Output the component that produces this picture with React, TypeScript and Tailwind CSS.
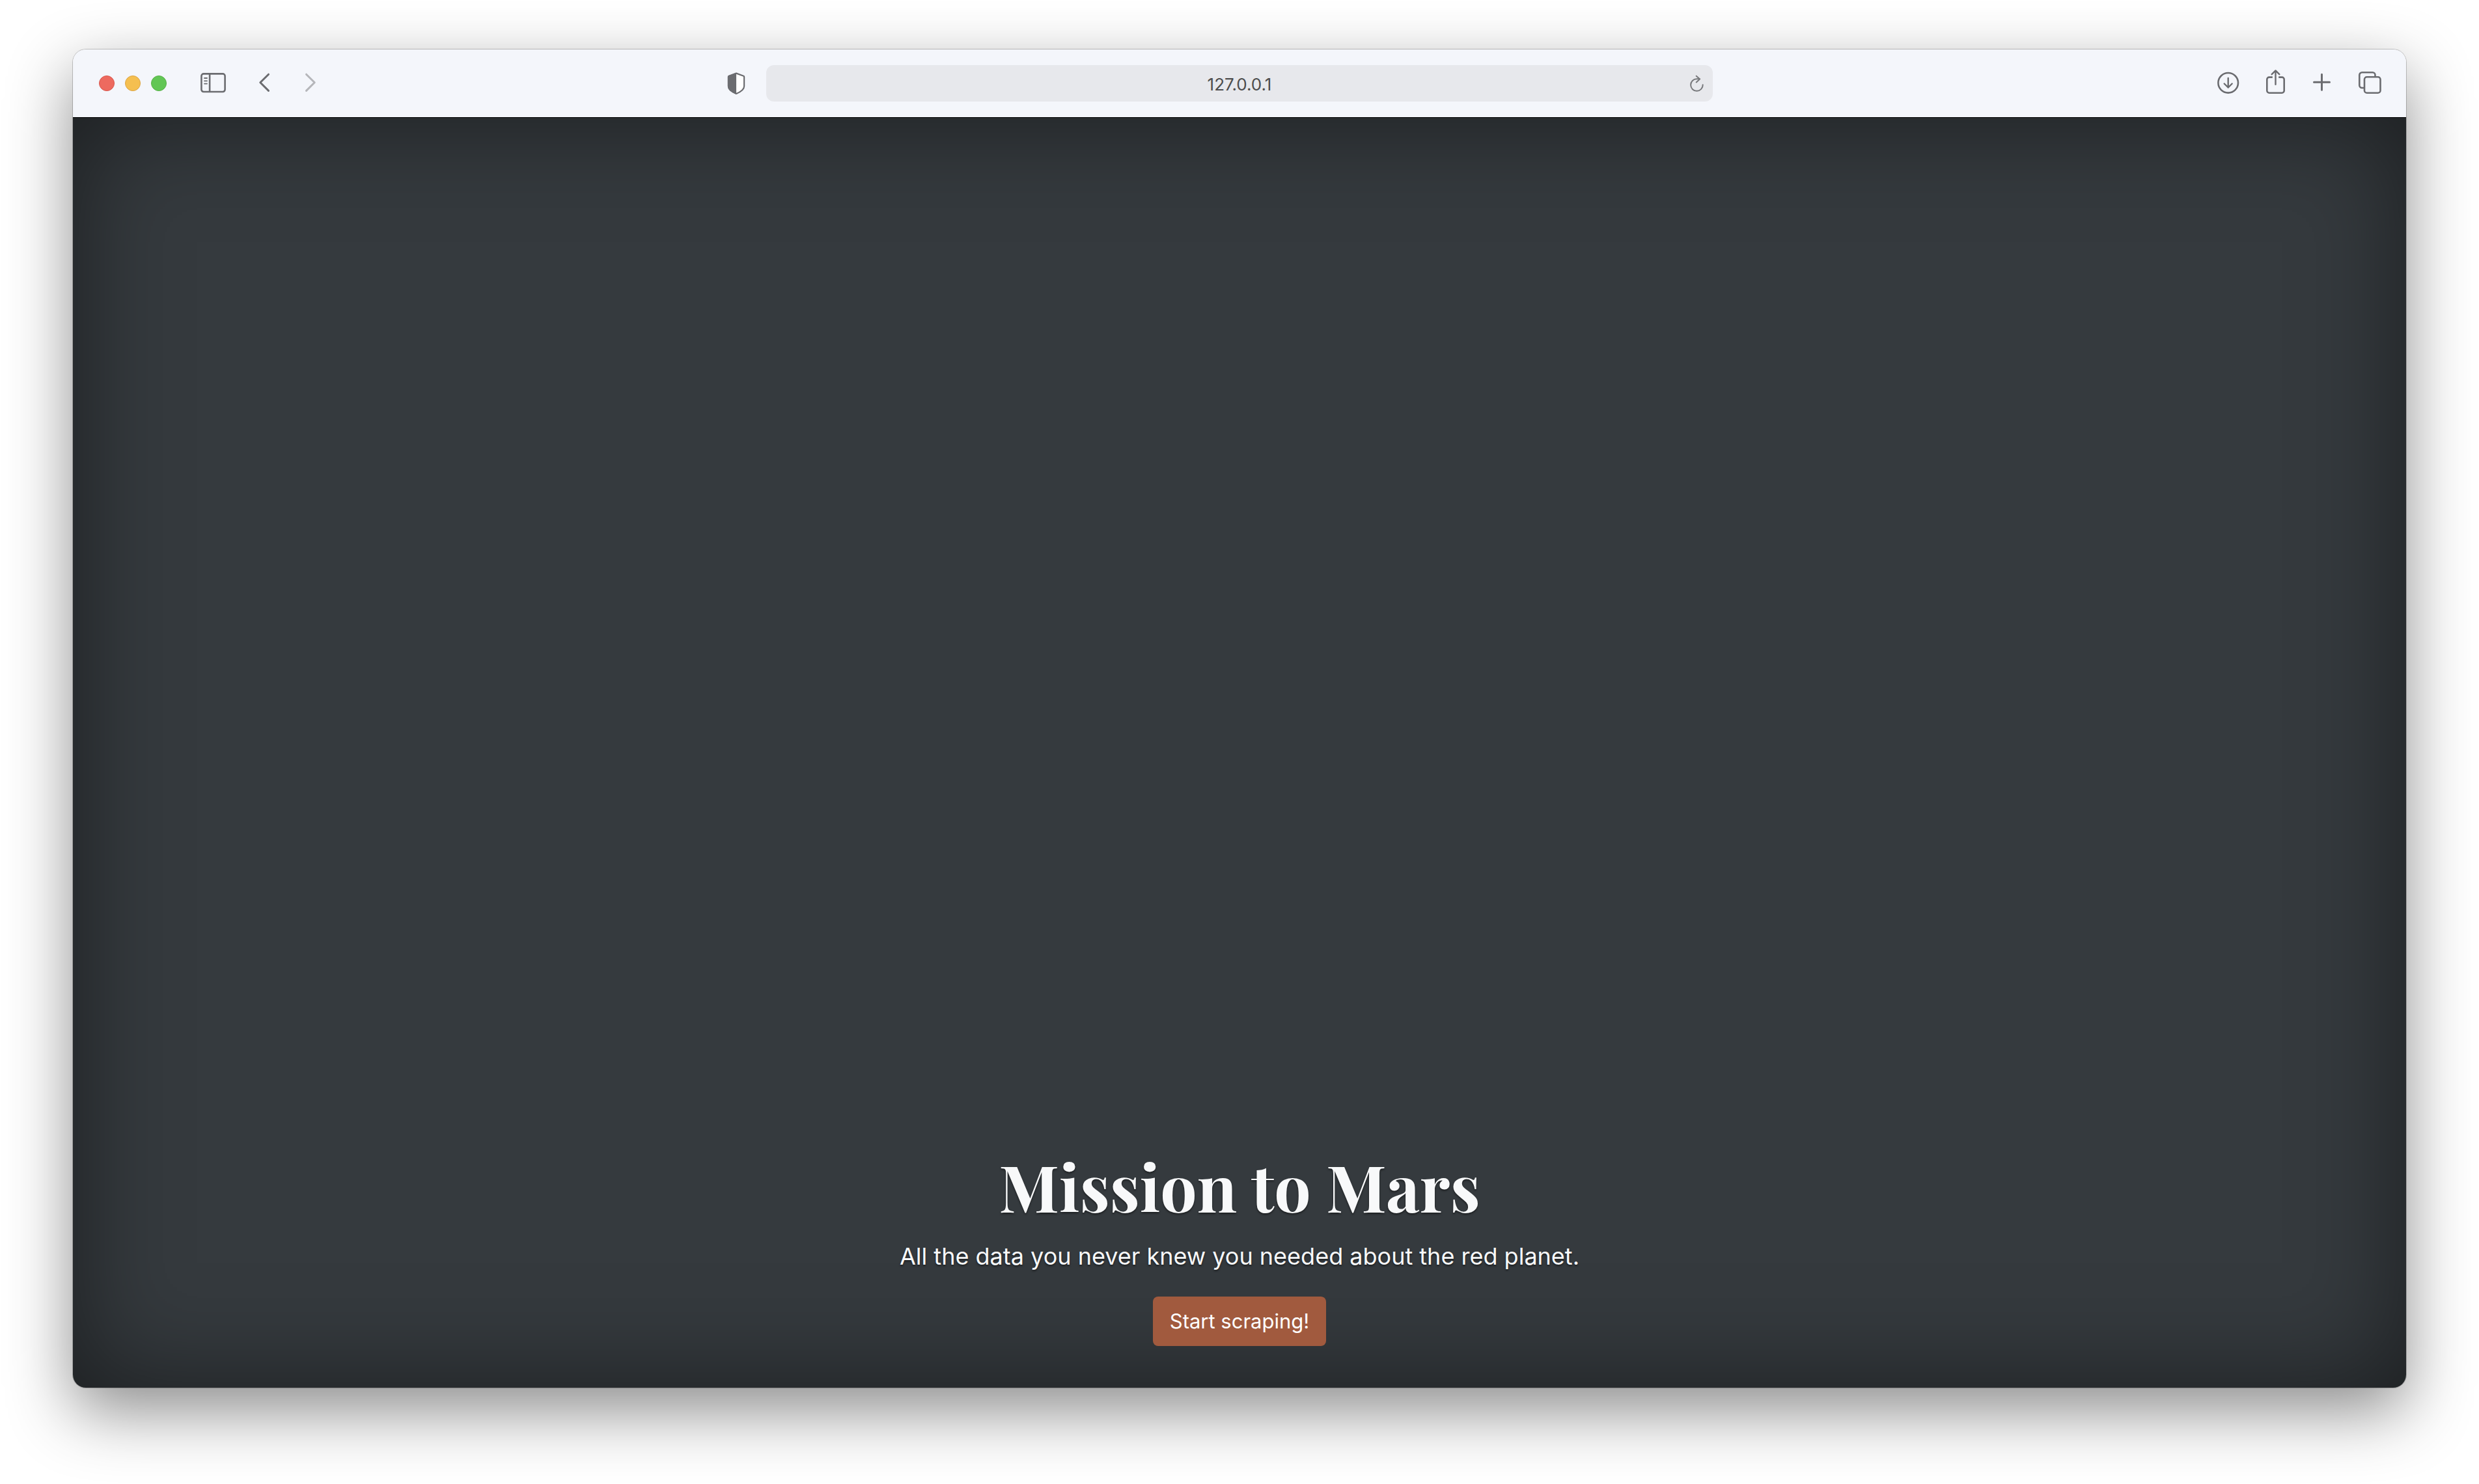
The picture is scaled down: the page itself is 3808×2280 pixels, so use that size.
import type { ReactNode } from "react";

function IconButton({ label, className, children }: { label: string; className?: string; children: ReactNode }) {
  return (
    <button type="button" aria-label={label} className={className}>
      {children}
    </button>
  );
}

const stroke = {
  fill: "none",
  stroke: "currentColor",
  strokeWidth: 2.6,
  strokeLinecap: "round" as const,
  strokeLinejoin: "round" as const,
};

function WindowControls() {
  return (
    <div className="flex gap-4">
      <button type="button" aria-label="Close" className="size-6 rounded-full border border-[#d9564c] bg-[#ed6a5f]" />
      <button type="button" aria-label="Minimize" className="size-6 rounded-full border border-[#dca545] bg-[#f5bf50]" />
      <button type="button" aria-label="Zoom" className="size-6 rounded-full border border-[#56b147] bg-[#62c655]" />
    </div>
  );
}

function Toolbar() {
  return (
    <header className="grid h-26 grid-cols-[1fr_minmax(0,1454px)_1fr] items-center bg-[#f4f6fb] px-9 text-[#6b6c70]">
      <div className="flex items-center pl-1 pr-8">
        <WindowControls />
        <IconButton label="Show sidebar" className="ml-13">
          <svg width="40" height="32" viewBox="0 0 40 32" {...stroke}>
            <rect x="1.4" y="1.4" width="36.2" height="27.6" rx="3.4" />
            <path d="M14.1 1.6v27.2" />
            <path d="M6 8h4M6 12.3h4M6 16.6h4" strokeWidth="1.8" />
          </svg>
        </IconButton>
        <IconButton label="Back" className="ml-12">
          <svg width="20" height="32" viewBox="0 0 20 32" {...stroke} strokeWidth="3">
            <path d="M16.5 2.2L3.8 14.8l12.7 12.6" />
          </svg>
        </IconButton>
        <IconButton label="Forward" className="ml-13 text-[#b5b6ba]">
          <svg width="20" height="32" viewBox="0 0 20 32" {...stroke} strokeWidth="3">
            <path d="M2.5 2.2l12.700 12.600L2.500 27.400" />
          </svg>
        </IconButton>
        <IconButton label="Privacy report" className="ml-auto">
          <svg width="28" height="34" viewBox="0 0 28 34">
            <path
              d="M14 1.6l11.2 4.1c.6.2.9.6.9 1.2v14.6c0 5-5 8.500-12.100 11.500C7 30 1.900 26.500 1.900 21.500V6.900c0-.6.3-1 .9-1.200z"
              fill="#fff"
              stroke="currentColor"
              strokeWidth="2.2"
              strokeLinejoin="round"
            />
            <path d="M14 .8L2.300 5.100C1.300 5.500.9 6.100.9 7v14.500c0 5.600 5.300 9.300 13.100 12.400z" fill="currentColor" />
          </svg>
        </IconButton>
      </div>

      <div className="relative">
        <input
          type="text"
          aria-label="Address"
          defaultValue="127.0.0.1"
          className="block h-14 w-full rounded-xl bg-[#e7e8ec] px-14 pt-0.5 text-center text-[26px] leading-8 text-[#4d4d4d] outline-none"
        />
        <IconButton label="Reload" className="absolute right-3 top-3.5">
          <svg width="24" height="28" viewBox="0 0 24 28" {...stroke} strokeWidth="2" stroke="#77787b">
            <path d="M20.700 16.200A9.300 9.300 0 1 1 11.400 7.200h4.500" />
            <path d="M10.700 2.700l5.400 4.700-5.400 5" />
          </svg>
        </IconButton>
      </div>

      <div className="flex items-center justify-end gap-9 pr-0.5">
        <IconButton label="Downloads">
          <svg width="36" height="42" viewBox="0 0 36 42" {...stroke}>
            <circle cx="16.700" cy="20.300" r="15.300" />
            <path d="M16.700 13v14.500M10.700 21.500l6 6 6-6" strokeWidth="2.400" />
          </svg>
        </IconButton>
        <IconButton label="Share">
          <svg width="36" height="42" viewBox="0 0 36 42" {...stroke}>
            <path d="M12.800 11.600H7.700a3.400 3.400 0 0 0-3.400 3.400v17.300a3.400 3.400 0 0 0 3.400 3.400h19.600a3.400 3.400 0 0 0 3.400-3.400V15a3.400 3.400 0 0 0-3.400-3.400h-5.100" strokeLinecap="butt" />
            <path d="M17.500 22.800V1.400M11.700 7.200l5.800-5.800 5.800 5.800" strokeWidth="2.400" />
          </svg>
        </IconButton>
        <IconButton label="New tab">
          <svg width="36" height="42" viewBox="0 0 36 42" {...stroke} strokeWidth="3">
            <path d="M16.500 7.300v24M4.500 19.300h24" />
          </svg>
        </IconButton>
        <IconButton label="Tab overview">
          <svg width="36" height="42" viewBox="0 0 36 42" {...stroke}>
            <path d="M26.500 11V8.300a4 4 0 0 0-4-4H6.300a4 4 0 0 0-4 4V24a4 4 0 0 0 4 4H10" strokeLinecap="butt" />
            <rect x="10" y="11.300" width="24.500" height="24.400" rx="3.800" />
          </svg>
        </IconButton>
      </div>
    </header>
  );
}

export default function App() {
  return (
    <div className="flex min-h-screen flex-col bg-white px-28 pb-37 pt-19 font-[Inter,'Liberation_Sans',sans-serif]">
      <div className="flex grow flex-col overflow-hidden rounded-[20px] shadow-[0_0_0_1px_rgba(0,0,0,0.2),0_36px_100px_rgba(0,0,0,0.45)]">
        <Toolbar />
        <main className="flex grow flex-col items-center justify-end border-t border-black bg-[#353a3e] px-8 pb-16 text-center text-[#f8f9fa] shadow-[inset_0_0_160px_rgba(0,0,0,0.5)] [text-shadow:0_2px_3px_rgba(0,0,0,0.5)]">
          <h1 className="mb-4 font-['Playfair_Display','Liberation_Serif',serif] text-[100px] font-bold leading-31">
            Mission to Mars
          </h1>
          <p className="mb-8 text-[36px] font-normal leading-15">
            All the data you never knew you needed about the red planet.
          </p>
          <button type="button" className="rounded-lg bg-[#a15a3e] px-6.5 py-3.5 text-[31px] leading-12 text-white">
            Start scraping!
          </button>
        </main>
      </div>
    </div>
  );
}
